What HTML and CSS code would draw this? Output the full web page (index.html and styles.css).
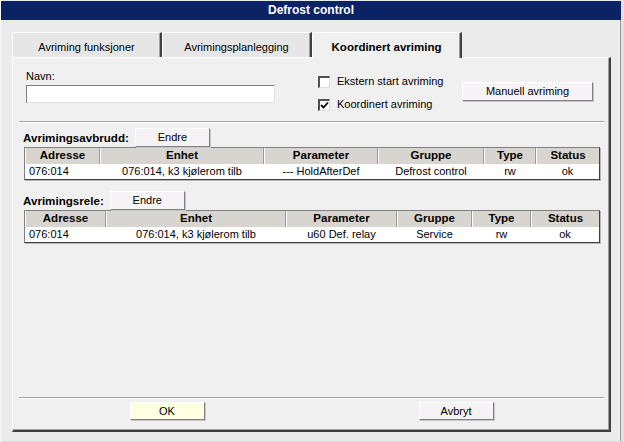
FILE: index.html
```html
<!DOCTYPE html>
<html>
<head>
<meta charset="utf-8">
<link rel="stylesheet" href="styles.css">
</head>
<body>
<div class="window">
  <div class="titlebar">Defrost control</div>
  <div class="client">
    <div class="tabs">
      <div class="tab">Avriming funksjoner</div>
      <div class="tab">Avrimingsplanlegging</div>
      <div class="tab active">Koordinert avriming</div>
    </div>
    <div class="panel">
      <div class="top">
        <div class="namefield">
          <div class="label">Navn:</div>
          <div class="input"></div>
        </div>
        <div class="checks">
          <div class="check"><span class="box"></span><span>Ekstern start avriming</span></div>
          <div class="check"><span class="box"><svg width="9" height="9" viewBox="0 0 9 9"><path d="M1 4 L3.5 6.5 L8 1.5" fill="none" stroke="#000" stroke-width="1.8"/></svg></span><span>Koordinert avriming</span></div>
        </div>
        <div class="btn manual">Manuell avriming</div>
      </div>
      <div class="sep"></div>

      <div class="section first">
        <div class="head"><span class="title">Avrimingsavbrudd:</span><div class="btn endre">Endre</div></div>
        <div class="table t1">
          <div class="th">Adresse</div><div class="th">Enhet</div><div class="th">Parameter</div><div class="th">Gruppe</div><div class="th">Type</div><div class="th last">Status</div>
          <div class="td left">076:014</div><div class="td">076:014, k3 kjølerom tilb</div><div class="td">--- HoldAfterDef</div><div class="td">Defrost control</div><div class="td">rw</div><div class="td">ok</div>
        </div>
      </div>

      <div class="section second">
        <div class="head"><span class="title">Avrimingsrele:</span><div class="btn endre">Endre</div></div>
        <div class="table t2">
          <div class="th">Adresse</div><div class="th">Enhet</div><div class="th">Parameter</div><div class="th">Gruppe</div><div class="th">Type</div><div class="th last">Status</div>
          <div class="td left">076:014</div><div class="td">076:014, k3 kjølerom tilb</div><div class="td">u60 Def. relay</div><div class="td">Service</div><div class="td">rw</div><div class="td">ok</div>
        </div>
      </div>

      <div class="spacer"></div>
      <div class="sep bottom"></div>
      <div class="actions">
        <div class="btn ok">OK</div>
        <div class="btn">Avbryt</div>
      </div>
    </div>
  </div>
</div>
</body>
</html>
```

FILE: styles.css
```css
* { box-sizing: border-box; }
html, body { margin: 0; padding: 0; }
body {
  width: 624px;
  height: 442px;
  overflow: hidden;
  font-family: "Liberation Sans", Arial, sans-serif;
  font-size: 11px;
  color: #000;
  background: #ebebeb;
}
.window {
  width: 624px;
  height: 442px;
  display: flex;
  flex-direction: column;
  background: #ebebeb;
  border-left: 1px solid #fafafa;
  border-right: 3px solid #e2e2e2;
  border-bottom: 1px solid #d8d8d8;
}
.titlebar {
  height: 20px;
  flex: none;
  background: #0b2265;
  border-top: 1px solid #e8e8f0;
  color: #fff;
  font-weight: bold;
  font-size: 12px;
  text-align: center;
  line-height: 19px;
}
.client {
  flex: 1;
  display: flex;
  flex-direction: column;
  padding: 12px 9px 9px 11px;
  border-right: 1px solid #9a9a9a;
}
.tabs {
  display: flex;
  height: 25px;
  flex: none;
  position: relative;
  z-index: 1;
}
.tab {
  width: 150px;
  height: 25px;
  background: #e6e6e6;
  border-top: 1px solid #fff;
  border-left: 1px solid #fff;
  border-right: 2px solid #404040;
  box-shadow: inset -1px 0 0 #a0a0a0;
  text-align: center;
  padding-top: 8px;
  line-height: 13px;
}
.tab.active {
  background: #f0f0f0;
  font-weight: bold;
  font-size: 11.5px;
  height: 26px;
}
.panel {
  flex: 1;
  display: flex;
  flex-direction: column;
  background: #f0f0f0;
  border-top: 1px solid #fff;
  border-left: 1px solid #fff;
  border-right: 2px solid #404040;
  border-bottom: 2px solid #404040;
  box-shadow: inset -1px -1px 0 #a0a0a0;
}
.top {
  display: flex;
  align-items: flex-start;
  padding: 12px 0 0 13px;
  height: 63px;
}
.namefield { width: 249px; }
.label { line-height: 13px; height: 13px; }
.input {
  margin-top: 2px;
  width: 249px;
  height: 18px;
  background: #fff;
  border-top: 1px solid #808080;
  border-left: 1px solid #808080;
  border-right: 1px solid #e0e0e0;
  border-bottom: 1px solid #e0e0e0;
}
.checks {
  margin-left: 43px;
  width: 144px;
  padding-top: 5px;
  display: flex;
  flex-direction: column;
  gap: 10px;
}
.check {
  display: flex;
  align-items: center;
  gap: 7px;
  height: 13px;
  line-height: 13px;
}
.box {
  width: 12px;
  height: 12px;
  flex: none;
  background: #fff;
  border-top: 2px solid #505050;
  border-left: 2px solid #505050;
  border-right: 1px solid #e0e0e0;
  border-bottom: 1px solid #e0e0e0;
  display: flex;
  align-items: center;
  justify-content: center;
}
.box svg { display: block; }
.btn {
  width: 75px;
  height: 19px;
  line-height: 17px;
  text-align: center;
  background: #f6f3f6;
  border-top: 1px solid #fff;
  border-left: 1px solid #fff;
  border-right: 1px solid #808080;
  border-bottom: 1px solid #808080;
  box-shadow: 1px 1px 0 #c8c8c8;
}
.btn.manual {
  width: 131px;
  margin-top: 12px;
  background: #f6f4f6;
}
.sep {
  flex: none;
  height: 2px;
  margin: 0 5px 0 6px;
  border-top: 1px solid #a0a0a0;
  border-bottom: 1px solid #fff;
}
.section { padding-left: 10px; }
.section.first { margin-top: 5px; }
.section.second { margin-top: 11px; }
.head {
  height: 19px;
  display: flex;
  align-items: center;
}
.title {
  font-weight: bold;
  font-size: 11.6px;
  margin-right: 6px;
}
.table {
  margin-left: 1px;
  width: 576px;
  display: grid;
  background: #fff;
  border-top: 1px solid #808080;
  border-left: 1px solid #808080;
  border-right: 1px solid #404040;
  border-bottom: 1px solid #404040;
  box-shadow: 1px 1px 0 #b8b8b8;
}
.t1 { grid-template-columns: 75px 164px 114px 106px 52px 1fr; }
.t2 { grid-template-columns: 81px 180px 111px 75px 59px 1fr; }
.th {
  height: 16px;
  line-height: 15px;
  background: #d8d5d0;
  font-weight: bold;
  font-size: 11.5px;
  text-align: center;
  border-right: 1px solid #9a9a9a;
  border-left: 1px solid #fff;
}
.th.last { border-right: none; }
.td {
  height: 15px;
  line-height: 14px;
  text-align: center;
  white-space: nowrap;
}
.td.left { text-align: left; padding-left: 4px; }
.spacer { flex: 1; }
.actions {
  display: flex;
  justify-content: center;
  gap: 214px;
  margin-top: 3px;
  height: 28px;
  padding-left: 1px;
}
.actions .btn { height: 18px; line-height: 16px; }
.btn.ok { background: #ffffe1; }
```
